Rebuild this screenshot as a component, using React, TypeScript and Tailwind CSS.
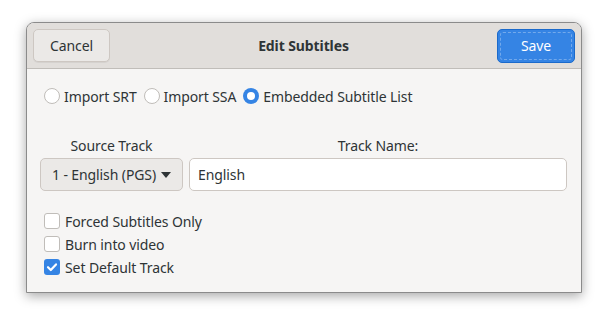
import { useState } from 'react'

const font = { fontFamily: '"Noto Sans", "Open Sans", sans-serif' }

function Radio({ label, checked }: { label: string; checked?: boolean }) {
  return (
    <label className="flex items-center gap-[4px]">
      {checked ? (
        <span className="w-[16px] h-[16px] rounded-full bg-[#3584e4] flex items-center justify-center">
          <span className="w-[8px] h-[8px] rounded-full bg-white" />
        </span>
      ) : (
        <span className="w-[16px] h-[16px] rounded-full border border-[#c0bdb9] bg-white" />
      )}
      <span>{label}</span>
    </label>
  )
}

function Check({ label, checked }: { label: string; checked?: boolean }) {
  return (
    <label className="flex items-center gap-[5px] h-[22px]">
      {checked ? (
        <span className="w-[16px] h-[16px] rounded-[3px] bg-[#3584e4] flex items-center justify-center">
          <svg width="12" height="12" viewBox="0 0 12 12">
            <path d="M2 6.2 L4.8 9 L10 3.4" fill="none" stroke="white" strokeWidth="2.2" strokeLinecap="round" strokeLinejoin="round" />
          </svg>
        </span>
      ) : (
        <span className="w-[16px] h-[16px] rounded-[3px] border border-[#c0bdb9] bg-white" />
      )}
      <span>{label}</span>
    </label>
  )
}

export default function App() {
  const [name, setName] = useState('English')

  return (
    <div className="w-[607px] h-[322px] bg-white pt-[22px] pl-[26px]" style={font}>
      <div className="w-[556px] h-[271px] rounded-t-[8px] border border-[#8b8b8b] bg-[#f6f5f4] shadow-[0_3px_12px_rgba(0,0,0,0.35)] flex flex-col overflow-hidden text-[14px] tracking-[-0.1px] text-[#2e3436]">
        {/* header */}
        <div className="h-[46px] shrink-0 bg-[#e1dedb] border-b border-[#c0bdb9] flex items-center justify-between px-[6px]">
          <button className="w-[77px] h-[33px] rounded-[5px] border border-[#cdc7c2] bg-[#ebe9e7] text-[14px] text-[#2e3436] shadow-[0_1px_0_rgba(0,0,0,0.05)]">
            Cancel
          </button>
          <div className="font-bold text-[14px] text-[#2e3436]">Edit Subtitles</div>
          <button className="w-[78px] h-[34px] rounded-[5px] border border-[#1b6acb] bg-[#3584e4] text-white text-[14px] p-[2px]">
            <span className="w-full h-full flex items-center justify-center rounded-[3px] border border-dashed border-white/30">
              Save
            </span>
          </button>
        </div>

        {/* body */}
        <div className="flex flex-col pl-[17px] pr-[14px] pt-[16px]">
          <div className="flex items-center gap-[7px] h-[22px]">
            <Radio label="Import SRT" />
            <Radio label="Import SSA" />
            <Radio label="Embedded Subtitle List" checked />
          </div>

          <div className="flex gap-[6px] mt-[28px] -ml-[4px]">
            <div className="flex flex-col items-center gap-[3px]">
              <span className="h-[20px]">Source Track</span>
              <button className="w-[143px] h-[33px] rounded-[5px] border border-[#cdc7c2] bg-[#ebe9e7] flex items-center justify-center gap-[5px] text-[14px] text-[#2e3436]">
                1 - English (PGS)
                <svg width="10" height="6" viewBox="0 0 10 6">
                  <path d="M0 0 H10 L5 6 Z" fill="#2e3436" />
                </svg>
              </button>
            </div>
            <div className="flex-1 flex flex-col items-center gap-[3px]">
              <span className="h-[20px]">Track Name:</span>
              <input
                value={name}
                onChange={e => setName(e.target.value)}
                className="w-full h-[33px] rounded-[5px] border border-[#cdc7c2] bg-white px-[8px] text-[14px] text-[#2e3436] outline-none"
              />
            </div>
          </div>

          <div className="flex flex-col mt-[19px] gap-[1px]">
            <Check label="Forced Subtitles Only" />
            <Check label="Burn into video" />
            <Check label="Set Default Track" checked />
          </div>
        </div>
      </div>
    </div>
  )
}
